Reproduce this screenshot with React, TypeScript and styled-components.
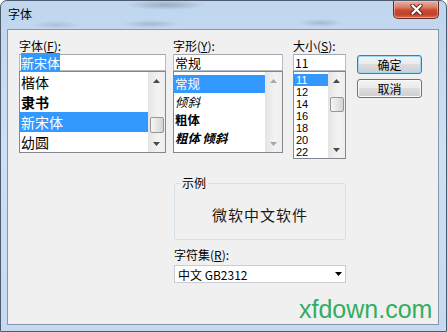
import React from "react";
import styled, { createGlobalStyle } from "styled-components";

const GlobalStyle = createGlobalStyle`
  html, body {
    margin: 0;
    padding: 0;
    background: #ffffff;
  }
  body {
    font-family: "Noto Sans CJK SC", "Liberation Sans", sans-serif;
    font-size: 12px;
    color: #000;
  }
`;

const Window = styled.div`
  position: relative;
  width: 447px;
  height: 332px;
  box-sizing: border-box;
  display: flex;
  flex-direction: column;
  padding: 0 7px 6px 6px;
  border: 1px solid #4d5b6d;
  border-radius: 7px 7px 0 0;
  overflow: hidden;
  background:
    radial-gradient(ellipse 40px 5px at 165px 4px, rgba(80, 95, 115, 0.35), transparent),
    radial-gradient(ellipse 30px 4px at 150px 23px, rgba(80, 95, 115, 0.25), transparent),
    radial-gradient(ellipse 22px 4px at 320px 22px, rgba(80, 95, 115, 0.25), transparent),
    radial-gradient(ellipse 25px 4px at 55px 24px, rgba(80, 95, 115, 0.2), transparent),
    linear-gradient(to bottom, #c0d6ee, #cde0f4 45%, #c5daf1);
`;

const TitleBar = styled.div`
  height: 28px;
  display: flex;
  justify-content: space-between;
  align-items: flex-start;
`;

const TitleText = styled.div`
  padding: 5px 0 0 1px;
  font-size: 12px;
  line-height: 16px;
  color: #000;
`;

const CloseButton = styled.div`
  width: 46px;
  height: 18px;
  box-sizing: border-box;
  display: flex;
  align-items: center;
  justify-content: center;
  border: 1px solid #6a2b20;
  border-top: none;
  border-radius: 0 0 5px 5px;
  background: linear-gradient(
    to bottom,
    #eab0a2 0%,
    #dc826f 35%,
    #c84a33 55%,
    #c2412a 80%,
    #d9734f 100%
  );
  box-shadow: inset 0 0 0 1px rgba(255, 210, 200, 0.45);
`;

const Client = styled.div`
  flex: 1;
  position: relative;
  background: #f0f0f0;
  border: 1px solid #8797ab;
  padding: 8px 0 0 11px;
  display: flex;
  flex-direction: column;
`;

const TopRow = styled.div`
  display: flex;
  align-items: flex-start;
`;

const Column = styled.div<{ $width: number; $gap?: number; $top?: number }>`
  width: ${(p) => p.$width}px;
  margin-right: ${(p) => p.$gap ?? 0}px;
  padding-top: ${(p) => p.$top ?? 0}px;
  display: flex;
  flex-direction: column;
`;

const FieldLabel = styled.div`
  height: 16px;
  font-size: 12px;
  line-height: 16px;
  white-space: nowrap;
`;

const TextField = styled.div<{ $size?: number }>`
  height: 17px;
  box-sizing: border-box;
  border: 1px solid #b5bac2;
  border-top-color: #a3a8b0;
  background: #fff;
  padding-left: 1px;
  font-size: ${(p) => p.$size ?? 12}px;
  line-height: 15px;
  white-space: nowrap;
`;

const Selected = styled.span`
  background: #3399ff;
  color: #fff;
`;

const ListBox = styled.div<{ $height: number }>`
  height: ${(p) => p.$height}px;
  box-sizing: border-box;
  border: 1px solid #828790;
  background: #fff;
  display: flex;
`;

const ListItems = styled.div<{ $padTop?: number }>`
  flex: 1;
  padding-top: ${(p) => p.$padTop ?? 0}px;
  overflow: hidden;
`;

const ListItem = styled.div<{
  $height: number;
  $size: number;
  $selected?: boolean;
  $bold?: boolean;
  $italic?: boolean;
  $latin?: boolean;
}>`
  height: ${(p) => p.$height}px;
  line-height: ${(p) => p.$height}px;
  font-size: ${(p) => p.$size}px;
  font-family: ${(p) =>
    p.$latin
      ? `"Liberation Sans", Arial, sans-serif`
      : `"Noto Sans CJK SC", sans-serif`};
  padding-left: ${(p) => (p.$latin ? 2 : 1)}px;
  white-space: nowrap;
  font-weight: ${(p) => (p.$bold ? 700 : 400)};
  font-style: ${(p) => (p.$italic ? "italic" : "normal")};
  background: ${(p) => (p.$selected ? "#3399ff" : "transparent")};
  color: ${(p) => (p.$selected ? "#fff" : "#000")};
`;

const ScrollTrack = styled.div`
  width: 17px;
  display: flex;
  flex-direction: column;
  background: linear-gradient(to right, #e4e4e4, #f3f3f3 60%, #eeeeee);
`;

const ArrowCell = styled.div`
  height: 17px;
  flex: none;
  display: flex;
  align-items: center;
  justify-content: center;
`;

const ThumbArea = styled.div`
  flex: 1;
  display: flex;
  flex-direction: column;
  align-items: center;
`;

const Thumb = styled.div<{ $offset: number; $height: number }>`
  margin-top: ${(p) => p.$offset}px;
  width: 14px;
  height: ${(p) => p.$height}px;
  box-sizing: border-box;
  border: 1px solid #979797;
  border-radius: 2px;
  background: linear-gradient(to right, #f5f5f5, #e6e6e6 50%, #d4d4d4);
`;

const DialogButton = styled.div<{ $default?: boolean }>`
  height: 19px;
  box-sizing: border-box;
  margin-bottom: 5px;
  display: flex;
  align-items: center;
  justify-content: center;
  font-size: 12px;
  border: 1px solid ${(p) => (p.$default ? "#3c7fb1" : "#707070")};
  border-radius: 3px;
  background: linear-gradient(
    to bottom,
    #f2f2f2 0%,
    #ebebeb 49%,
    #dddddd 50%,
    #cfcfcf 100%
  );
  box-shadow: ${(p) =>
    p.$default ? "inset 0 0 0 1px #9fd5f3" : "inset 0 0 0 1px #fbfbfb"};
`;

const BottomSection = styled.div`
  margin-left: 155px;
  margin-top: 17px;
  width: 172px;
  display: flex;
  flex-direction: column;
`;

const SampleGroup = styled.fieldset`
  margin: 0;
  padding: 0;
  border: 1px solid #d5dfe5;
  border-radius: 3px;
  min-width: 0;
`;

const SampleLegend = styled.legend`
  margin-left: 5px;
  padding: 0 2px;
  font-size: 12px;
  line-height: 14px;
`;

const SampleBody = styled.div`
  height: 49px;
  display: flex;
  align-items: center;
  justify-content: center;
  font-size: 15px;
  letter-spacing: 1px;
  color: #1a1a1a;
`;

const CharsetLabel = styled(FieldLabel)`
  margin-top: 7px;
`;

const Dropdown = styled.div`
  margin-top: 2px;
  height: 18px;
  box-sizing: border-box;
  border: 1px solid #c9cdd3;
  background: #fff;
  display: flex;
  align-items: center;
  justify-content: space-between;
  padding: 0 3px 0 3px;
  font-size: 12px;
`;

const Watermark = styled.div`
  position: absolute;
  left: 298px;
  top: 296px;
  font-family: "Liberation Sans", Arial, sans-serif;
  font-size: 25px;
  line-height: 25px;
  color: #34ad5e;
  white-space: nowrap;
`;

const Arrow = ({ up, color = "#4a4a4a" }: { up?: boolean; color?: string }) => (
  <svg width="7" height="4" viewBox="0 0 7 4">
    <polygon points={up ? "3.5,0 7,4 0,4" : "0,0 7,0 3.5,4"} fill={color} />
  </svg>
);

const ScrollBar = ({
  thumb,
  disabled,
}: {
  thumb?: { offset: number; height: number };
  disabled?: boolean;
}) => {
  const color = disabled ? "#a7a7a7" : "#4a4a4a";
  return (
    <ScrollTrack>
      <ArrowCell>
        <Arrow up color={color} />
      </ArrowCell>
      <ThumbArea>
        {thumb && <Thumb $offset={thumb.offset} $height={thumb.height} />}
      </ThumbArea>
      <ArrowCell>
        <Arrow color={color} />
      </ArrowCell>
    </ScrollTrack>
  );
};

const CloseIcon = () => (
  <svg width="13" height="11" viewBox="0 0 13 11">
    <path
      d="M2.5 1.5 L10.5 9.5 M10.5 1.5 L2.5 9.5"
      stroke="#5a2116"
      strokeWidth="4.2"
      strokeLinecap="round"
    />
    <path
      d="M2.5 1.5 L10.5 9.5 M10.5 1.5 L2.5 9.5"
      stroke="#ffffff"
      strokeWidth="2.4"
      strokeLinecap="round"
    />
  </svg>
);

const fonts = [
  { name: "楷体" },
  { name: "隶书", bold: true },
  { name: "新宋体", selected: true },
  { name: "幼圆" },
];

const styles = [
  { name: "常规", selected: true },
  { name: "倾斜", italic: true },
  { name: "粗体", bold: true },
  { name: "粗体 倾斜", bold: true, italic: true },
];

const sizes = ["11", "12", "14", "16", "18", "20", "22"];

const App = () => {
  return (
    <>
      <GlobalStyle />
      <Window>
        <TitleBar>
          <TitleText>字体</TitleText>
          <CloseButton>
            <CloseIcon />
          </CloseButton>
        </TitleBar>
        <Client>
          <TopRow>
            <Column $width={147} $gap={7}>
              <FieldLabel>
                字体(<u>F</u>):
              </FieldLabel>
              <TextField $size={13}>
                <Selected>新宋体</Selected>
              </TextField>
              <ListBox $height={82}>
                <ListItems>
                  {fonts.map((f) => (
                    <ListItem
                      key={f.name}
                      $height={20}
                      $size={14}
                      $bold={f.bold}
                      $selected={f.selected}
                    >
                      {f.name}
                    </ListItem>
                  ))}
                </ListItems>
                <ScrollBar thumb={{ offset: 28, height: 16 }} />
              </ListBox>
            </Column>

            <Column $width={110} $gap={10}>
              <FieldLabel>
                字形(<u>Y</u>):
              </FieldLabel>
              <TextField $size={13}>常规</TextField>
              <ListBox $height={82}>
                <ListItems $padTop={3}>
                  {styles.map((s) => (
                    <ListItem
                      key={s.name}
                      $height={18}
                      $size={12.4}
                      $bold={s.bold}
                      $italic={s.italic}
                      $selected={s.selected}
                    >
                      {s.name}
                    </ListItem>
                  ))}
                </ListItems>
                <ScrollBar disabled />
              </ListBox>
            </Column>

            <Column $width={53} $gap={11}>
              <FieldLabel>
                大小(<u>S</u>):
              </FieldLabel>
              <TextField>11</TextField>
              <ListBox $height={88}>
                <ListItems $padTop={2}>
                  {sizes.map((s, i) => (
                    <ListItem
                      key={s}
                      $height={12}
                      $size={11}
                      $latin
                      $selected={i === 0}
                    >
                      {s}
                    </ListItem>
                  ))}
                </ListItems>
                <ScrollBar thumb={{ offset: 8, height: 15 }} />
              </ListBox>
            </Column>

            <Column $width={65} $top={17}>
              <DialogButton $default>确定</DialogButton>
              <DialogButton>取消</DialogButton>
            </Column>
          </TopRow>

          <BottomSection>
            <SampleGroup>
              <SampleLegend>示例</SampleLegend>
              <SampleBody>微软中文软件</SampleBody>
            </SampleGroup>
            <CharsetLabel>
              字符集(<u>R</u>):
            </CharsetLabel>
            <Dropdown>
              <span>中文 GB2312</span>
              <svg width="7" height="4" viewBox="0 0 7 4">
                <polygon points="0,0 7,0 3.5,4" fill="#000" />
              </svg>
            </Dropdown>
          </BottomSection>
        </Client>
        <Watermark>xfdown.com</Watermark>
      </Window>
    </>
  );
};

export default App;
